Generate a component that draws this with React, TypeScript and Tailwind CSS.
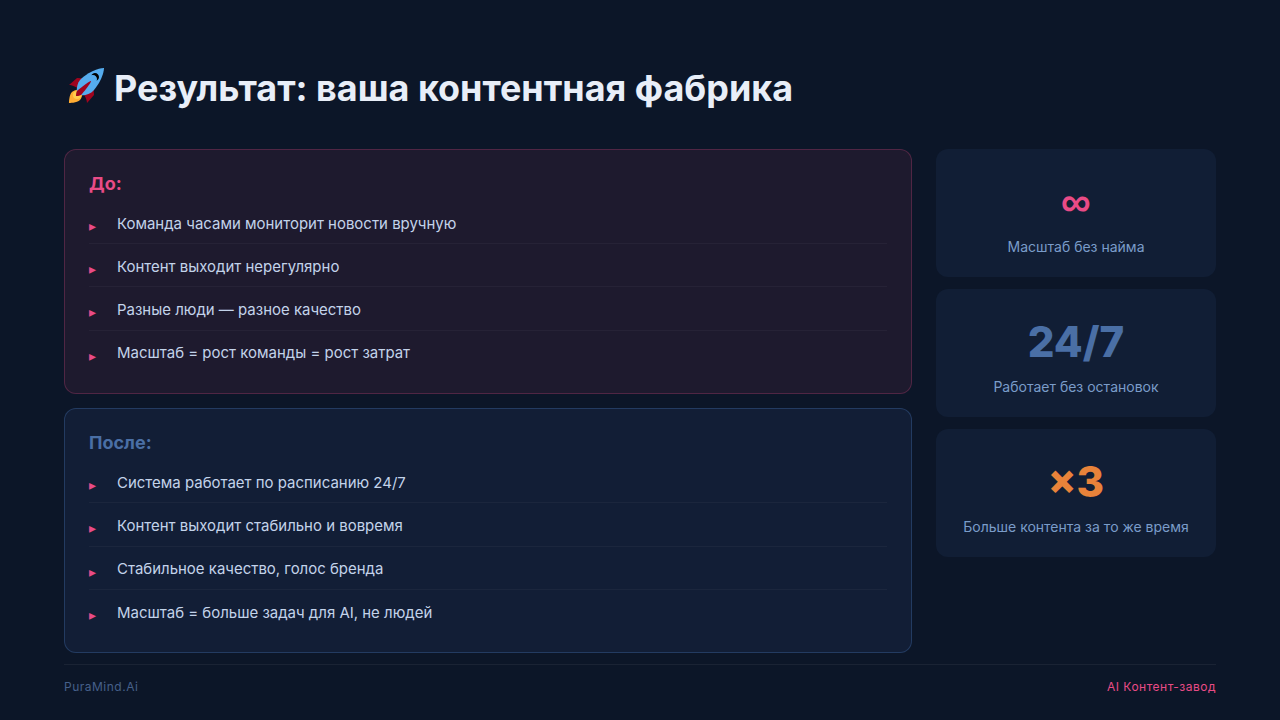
const beforeItems = [
  "Команда часами мониторит новости вручную",
  "Контент выходит нерегулярно",
  "Разные люди — разное качество",
  "Масштаб = рост команды = рост затрат",
];

const afterItems = [
  "Система работает по расписанию 24/7",
  "Контент выходит стабильно и вовремя",
  "Стабильное качество, голос бренда",
  "Масштаб = больше задач для AI, не людей",
];

function Rocket() {
  return (
    <svg viewBox="0 0 36 36" className="w-9 h-9 shrink-0">
      <path fill="#A0041E" d="M1 17l8-7 16 1 1 16-7 8s.001-5.999-6-12-12-6-12-6z" />
      <path fill="#FFAC33" d="M.973 35s-.036-7.979 2.985-11S15 21.187 15 21.187 14.999 29 11.999 32c-3 3-11.026 3-11.026 3z" />
      <circle fill="#FFCC4D" cx="8.999" cy="27" r="4" />
      <path fill="#55ACEE" d="M35.999 0s-10 0-22 10c-6 5-6 14-4 16s11 2 16-4c10-12 10-22 10-22z" />
      <path d="M26.999 5c-1.623 0-3.013.971-3.641 2.36.502-.227 1.055-.36 1.641-.36 2.209 0 4 1.791 4 4 0 .586-.133 1.139-.359 1.64 1.389-.627 2.359-2.017 2.359-3.64 0-2.209-1.791-4-4-4z" />
      <path fill="#A0041E" d="M8 28s0-4 1-5 13.001-10.999 14-10-9.001 13-10.001 14S8 28 8 28z" />
    </svg>
  );
}

function ItemList({ items }: { items: string[] }) {
  return (
    <ul>
      {items.map((item, i) => (
        <li
          key={item}
          className={`h-[43.2px] pt-[10.85px] pl-7 relative text-[14.98px] leading-6 text-[#c3d3ea] ${
            i < items.length - 1 ? "border-b border-[#ffffff0a]" : ""
          }`}
        >
          <span className="absolute left-0 top-[15.05px] text-sm leading-5 text-[#e94b86]">▸</span>
          {item}
        </li>
      ))}
    </ul>
  );
}

function Stat({ value, label, color }: { value: string; label: string; color: string }) {
  return (
    <div className="h-32 pt-px rounded-xl bg-[#111e35] flex flex-col items-center justify-center">
      <div className={`text-[42px] leading-[1.6] font-extrabold ${color}`}>{value}</div>
      <div className="mt-px text-sm leading-[1.6] text-[#7a9cc9]">{label}</div>
    </div>
  );
}

export default function App() {
  return (
    <div
      className="w-[1280px] h-[720px] overflow-hidden bg-[#0c1628] flex flex-col px-16 pt-[68px] pb-5"
      style={{ fontFamily: "Inter, 'Noto Sans', sans-serif" }}
    >
      <h1 className="flex items-start text-[35.95px] leading-10 font-bold text-[#e8eef8] pl-1 gap-[10px]">
        <Rocket />
        Результат: ваша контентная фабрика
      </h1>

      <div className="flex gap-6 mt-[41px]">
        <div className="w-[848px] flex flex-col gap-[14px]">
          <section className="h-[245px] rounded-xl border border-[#e94b8640] bg-[#1e1a2e] px-6 pt-6">
            <h2 className="text-lg leading-5 font-bold text-[#e94b86] mb-[6.95px]">До:</h2>
            <ItemList items={beforeItems} />
          </section>
          <section className="h-[245px] rounded-xl border border-[#3f67a366] bg-[#121e36] px-6 pt-[24.25px]">
            <h2 className="text-lg leading-5 font-bold text-[#4a6fa5] mb-[6.95px]">После:</h2>
            <ItemList items={afterItems} />
          </section>
        </div>

        <div className="w-[280px] flex flex-col gap-3">
          <Stat value="∞" label="Масштаб без найма" color="text-[#e94b86] font-['Liberation_Sans']" />
          <Stat value="24/7" label="Работает без остановок" color="text-[#4a6fa5]" />
          <Stat value="×3" label="Больше контента за то же время" color="text-[#e8833a]" />
        </div>
      </div>

      <footer className="mt-[11px] pt-[14px] border-t border-[#ffffff0f] flex justify-between text-xs leading-4 tracking-[0.5px]">
        <span className="text-[#46608a]">PuraMind.Ai</span>
        <span className="text-[#e94b86]">AI Контент-завод</span>
      </footer>
    </div>
  );
}
